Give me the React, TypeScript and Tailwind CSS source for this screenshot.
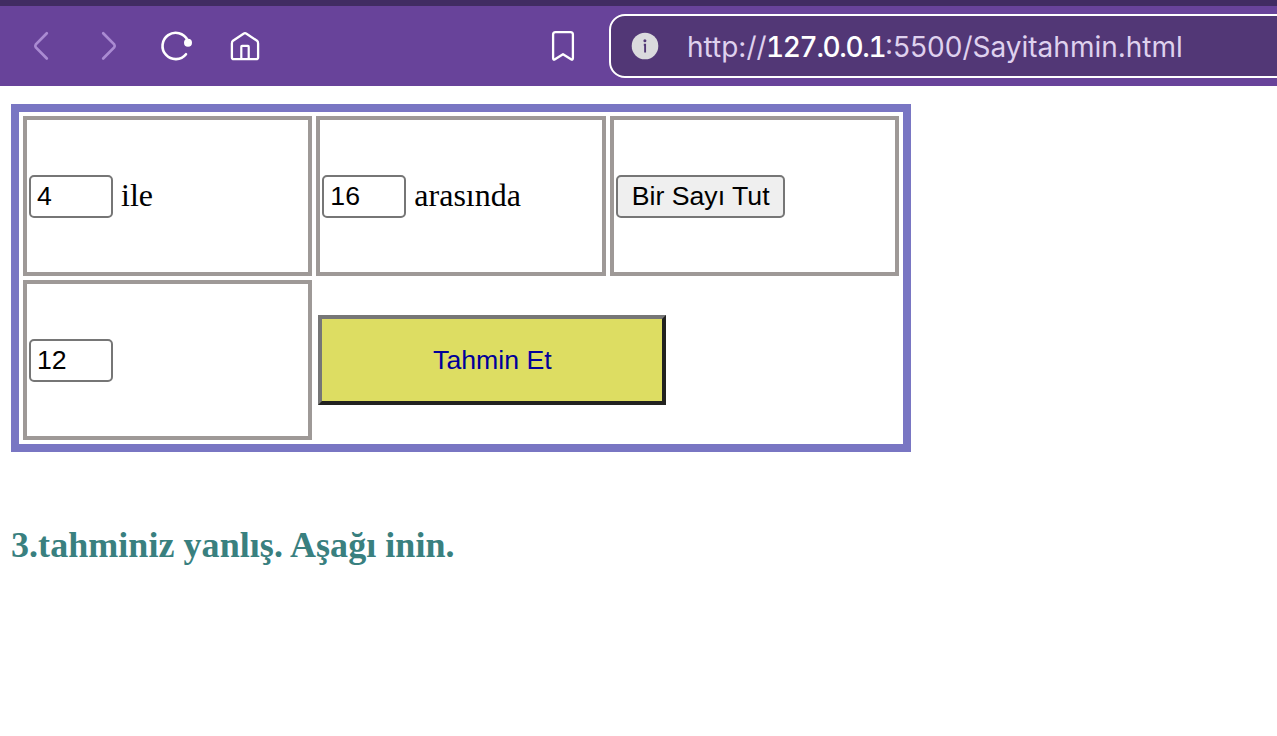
import type { ReactNode } from "react";

function Cell({ children }: { children: ReactNode }) {
  return (
    <div className="flex h-40 items-center border-4 border-[#9e9997] pl-[2px]">
      {children}
    </div>
  );
}

function NumberField({ value, label }: { value: string; label: string }) {
  return (
    <input
      type="text"
      aria-label={label}
      defaultValue={value}
      className="h-[43px] w-[84px] rounded-[5px] border-2 border-[#767676] bg-white pl-[6px] font-['Liberation_Sans',Arial,sans-serif] text-[26.67px] leading-[31px] text-black outline-none"
    />
  );
}

function Toolbar() {
  return (
    <header className="flex h-[86px] items-center overflow-hidden border-t-[6px] border-[#412c62] bg-[#68439a]">
      <svg className="h-20 w-[609px] shrink-0" viewBox="0 6 609 80" fill="none" strokeLinecap="round" strokeLinejoin="round">
        <g stroke="#aa8bd2" strokeWidth="2.7">
          <path d="M46.800 33.300L35.800 44.400Q34.800 46 35.800 47.400L46.800 58.500" />
          <path d="M103.200 33.300L114.200 44.400Q115.200 46 114.200 47.400L103.200 58.500" />
        </g>
        <g stroke="#fff" strokeWidth="2.6">
          <path d="M186 54.200A13.200 13.200 0 1 1 187.500 40" />
          <circle cx="188" cy="42.8" r="2.7" fill="#fff" />
          <path d="M233 40.700L243.500 33.700Q245 32.700 246.500 33.700L257 40.700Q258.100 41.700 258.100 43.500V57.200Q258.100 59.200 256.100 59.200H233.900Q231.900 59.200 231.900 57.200V43.500Q231.900 41.700 233 40.700Z" strokeWidth="2.300" />
          <path d="M241.300 59V46.700Q241.300 45.900 242 45.900H248Q248.700 45.900 248.700 46.700V59" strokeWidth="2.200" />
          <path d="M553.100 34.500Q553.100 32.100 555.500 32.100H570.500Q572.900 32.100 572.900 34.500V58Q572.900 60.500 571 59.300L563 54.200L555 59.300Q553.100 60.500 553.100 58Z" strokeWidth="2.300" />
        </g>
      </svg>
      <div className="flex h-16 w-[720px] shrink-0 items-center rounded-[16px] border-2 border-white bg-[#523776] pl-5">
        <svg className="h-[28px] w-[28px] shrink-0" viewBox="0 0 28 28">
          <circle cx="14" cy="14" r="13.3" fill="#dadadd" />
          <circle cx="13.900" cy="8.700" r="1.500" fill="#523776" />
          <path d="M12.800 12.800H14.100V20.500" fill="none" stroke="#523776" strokeWidth="1.900" />
        </svg>
        <div className="ml-[28px] flex whitespace-pre pt-px font-['Inter',sans-serif] text-[28px] leading-8 text-[#dfd1ee]">
          <span className="w-[79px]">http://</span>
          <span className="w-[119px] font-medium tracking-[-1.35px] tabular-nums text-white">127.0.0.1</span>
          <span>:5500/Sayitahmin.html</span>
        </div>
      </div>
    </header>
  );
}

export default function App() {
  return (
    <div className="h-[736px] overflow-hidden bg-white font-['Liberation_Serif','Times_New_Roman',serif] text-[32px] text-black">
      <Toolbar />
      <main className="pt-[18px] pl-[11px]">
        <div className="grid w-[900px] grid-cols-3 gap-1 border-8 border-[#7976c3] p-1">
          <Cell>
            <NumberField value="4" label="Alt sınır" />
            <span className="ml-2 pb-[3px]">ile</span>
          </Cell>
          <Cell>
            <NumberField value="16" label="Üst sınır" />
            <span className="ml-2 pb-[3px]">arasında</span>
          </Cell>
          <Cell>
            <button className="h-[43px] w-[169px] rounded-[5px] border-2 border-[#767676] bg-[#efefef] pl-px font-['Liberation_Sans',Arial,sans-serif] text-[26.67px] leading-[31px]">
              Bir Sayı Tut
            </button>
          </Cell>
          <Cell>
            <NumberField value="12" label="Tahmin" />
          </Cell>
          <div className="col-span-2 flex items-center pl-[2px]">
            <button className="h-[90px] w-[348px] border-4 border-t-[#767676] border-r-[#222220] border-b-[#222220] border-l-[#767676] bg-[#dddd62] font-['Liberation_Sans',Arial,sans-serif] text-[26.67px] text-[#00009a]">
              Tahmin Et
            </button>
          </div>
        </div>
        <h3 className="mt-[72px] text-[36px] leading-[43px] font-bold tracking-[0.05px] text-[#39807f]">
          3.tahminiz yanlış. Aşağı inin.
        </h3>
      </main>
    </div>
  );
}
